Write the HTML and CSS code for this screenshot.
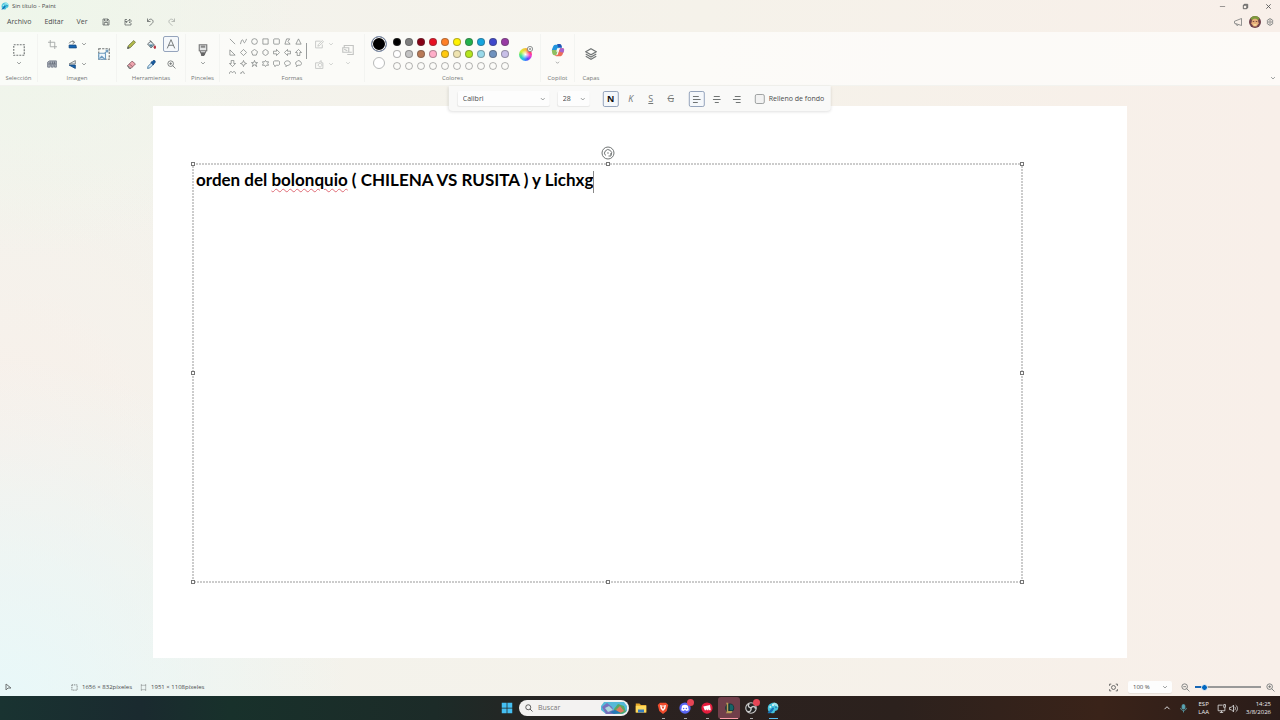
FILE: index.html
```html
<!DOCTYPE html>
<html lang="es">
<head>
<meta charset="utf-8">
<title>Sin título - Paint</title>
<link rel="stylesheet" href="styles.css">
</head>
<body>
<svg class="defs" aria-hidden="true">
  <symbol id="chev" viewBox="0 0 8 8"><path d="M1.500 2.800 4 5.300 6.500 2.800"/></symbol>
  <symbol id="paint" viewBox="0 0 16 16"><path d="M9 1c4 0 6.500 3 6 7-.4 3-2 3.500-3.500 3.500-1 0-1 1-1.200 2C10 14.500 9 15 7 15 3 15 1 12 1 8.500 1 4 4.500 1 9 1z" fill="#45c3dc" stroke="none"/><path d="M9 1c4 0 6.500 2.500 6 6-2-1-5-2-7-5z" fill="#9be6ee" stroke="none"/><path d="M1 14c2-1 3-4 7-7l1.500 1.500C7 14 4 15.500 1 15z" fill="#1672b8" stroke="none"/><circle cx="4.500" cy="6.500" r="1.300" fill="#d9f8fb" stroke="none"/><circle cx="8" cy="4" r="1.200" fill="#fff" stroke="none"/><circle cx="12" cy="7" r="1.200" fill="#2681b0" stroke="none"/></symbol>
</svg>

<header class="titlebar">
  <svg class="logo"><use href="#paint"/></svg>
  <h1 class="title">Sin título - Paint</h1>
  <div class="window-buttons">
    <button aria-label="Minimizar"><svg class="dim" viewBox="0 0 8 8"><path d="M1 4h6"/></svg></button>
    <button aria-label="Restaurar"><svg viewBox="0 0 8 8"><path d="M1.500 2.500h4v4h-4zM2.500 2.500v-1h4v4h-1"/></svg></button>
    <button aria-label="Cerrar"><svg viewBox="0 0 8 8"><path d="M1.500 1.500l5 5M6.500 1.500l-5 5"/></svg></button>
  </div>
</header>

<nav class="menubar">
  <button class="menu">Archivo</button>
  <button class="menu">Editar</button>
  <button class="menu">Ver</button>
  <div class="quick">
    <button aria-label="Guardar"><svg viewBox="0 0 16 16"><path d="M2 2h10l2 2v10H2zM5 2v4h6V2M4.500 14V9h7v5"/></svg></button>
    <button aria-label="Compartir"><svg viewBox="0 0 16 16"><path d="M6 3H2v11h12v-4M5 10c0-4 3-5 6-5V2l4 4-4 4V7M2 7h4"/></svg></button>
    <button aria-label="Deshacer"><svg viewBox="0 0 16 16"><path d="M3 1v6h6M3 7c3-5 7-6 10-3 3 4 0 7-6 11"/></svg></button>
    <button aria-label="Rehacer" disabled><svg viewBox="0 0 16 16"><path d="M13 1v6H7M13 7C10 2 6 1 3 4c-3 4 0 7 6 11"/></svg></button>
  </div>
  <div class="account">
    <button aria-label="Comentarios"><svg viewBox="0 0 16 16"><path d="M15 1v14L1 10.500v-4zM4 12c0 3 4 4 5 1.500"/></svg></button>
    <button class="avatar" aria-label="Cuenta"><svg viewBox="0 0 16 16"><circle cx="8" cy="8" r="8" fill="#70404a"/><path d="M2 3c3-4 9-4 12 0l-2 3H4z" fill="#7d9a3c"/><path d="M4 6c1-3 7-3 8 0l1 4-3 4H6l-3-4z" fill="#e7ad7a"/><path d="M5 7h2v1H5zm4 0h2v1H9z" fill="#5a3030"/><path d="M5 10l3 1 3-1-2 3H7z" fill="#f6dc9b"/></svg></button>
    <button aria-label="Configuración"><svg viewBox="0 0 16 16"><path d="M6.500 1.500h3l.5 2 2-.5 2 3-1.500 2 1.500 2-2 3-2-.5-.5 2h-3l-.5-2-2 .5-2-3L3.500 8 2 6l2-3 2 .5z"/><circle cx="8" cy="8" r="2.500"/></svg></button>
  </div>
</nav>

<section class="ribbon" aria-label="Herramientas de Paint">
  <div class="group g-select">
    <div class="tools stack">
      <button class="tool" aria-label="Seleccionar"><svg class="i12" viewBox="0 0 16 16"><rect x="1" y="1" width="14" height="14" stroke-dasharray="2.500 1.500"/></svg></button>
      <svg class="chev"><use href="#chev"/></svg>
    </div>
    <span class="caption">Selección</span>
  </div>

  <div class="group g-image">
    <div class="tools image-tools">
      <div class="col">
        <button class="tool" aria-label="Recortar"><svg viewBox="0 0 16 16" class="dim"><path d="M4 0v12h12M0 4h12v12"/></svg></button>
        <button class="tool" aria-label="Quitar fondo"><svg class="i10" viewBox="0 0 16 16"><path d="M1 13V5l3-2h11v10h-3v-3h-2v3H7v-3H5v3z" fill="#a9afb8" stroke="#7b8290"/><path d="M2 8h12M5 4v4M9 4v4M12 4v4" stroke="#686f7d"/></svg></button>
      </div>
      <div class="col">
        <button class="tool split" aria-label="Girar"><svg viewBox="0 0 16 16"><path d="M2 9h12l1 5H2z" fill="#1668b5" stroke="#174a80"/><path d="M2 6c2-4 6-4 9-2M8 1l4 3-4 3"/></svg><svg class="chev"><use href="#chev"/></svg></button>
        <button class="tool split" aria-label="Voltear"><svg viewBox="0 0 16 16"><path d="M13 1v6L2 7z" fill="#e7eef5"/><path d="M13 9v6L2 9z" fill="#1668b5" stroke="#174a80"/></svg><svg class="chev"><use href="#chev"/></svg></button>
      </div>
      <button class="tool resize" aria-label="Cambiar tamaño"><svg class="i12" viewBox="0 0 16 16"><rect x="1" y="1" width="14" height="14" stroke-dasharray="3 1.500"/><rect x="1" y="7" width="9" height="8" rx="1" fill="#eef6fc" stroke="#6d9cc0"/><path d="M2 14l3-3 4 4M9 7l4-4M10 3h3v3" stroke="#6d9cc0"/></svg></button>
    </div>
    <span class="caption">Imagen</span>
  </div>

  <div class="group g-tools">
    <div class="tools tool-grid">
      <button class="tool" aria-label="Lápiz"><svg viewBox="0 0 16 16"><path d="M1 15l1.500-5L12 1l3 3-9 9.500z" fill="#b4bd4a" stroke="#6d7440"/><path d="M1 15l1-3 2 2z" fill="#333"/></svg></button>
      <button class="tool" aria-label="Rellenar"><svg viewBox="0 0 16 16"><path d="M1 7l6-5 6 7-6 5z" fill="#e5edf1" stroke="#50585e"/><path d="M3 8h9l-5 5z" fill="#4f8299" stroke="none"/><path d="M5 0l3 5"/><path d="M14 10c3 4 1 5 0 5s-3-1 0-5z" fill="#c7303e" stroke="#a72634"/></svg></button>
      <button class="tool active" aria-label="Texto" aria-pressed="true"><svg class="i10" viewBox="0 0 16 16"><path d="M2 15L8 1l6 14M4.200 10h7.600"/></svg></button>
      <button class="tool" aria-label="Borrador"><svg viewBox="0 0 16 16"><path d="M1 10l8-8 6 5-8 8H4z" fill="#efa4ae" stroke="#885a62"/><path d="M1 10l6 5H4z" fill="#fff"/><path d="M4 7l6 5" stroke="#885a62"/></svg></button>
      <button class="tool" aria-label="Selector de color"><svg viewBox="0 0 16 16"><path d="M1 15l1-4 6-6 3 3-6 6z" fill="#d9edf9" stroke="#397099"/><path d="M7 4l2-1 2-2c2-2 5 1 3 4l-2 2-1 2z" fill="#165ba0" stroke="#174a80"/></svg></button>
      <button class="tool" aria-label="Lupa"><svg viewBox="0 0 16 16"><circle cx="6.500" cy="6.500" r="5"/><path d="M10 10l5 5M4 6.500h5M6.500 4v5"/></svg></button>
    </div>
    <span class="caption">Herramientas</span>
  </div>

  <div class="group g-brush">
    <div class="tools stack">
      <button class="tool" aria-label="Pinceles"><svg class="i12" viewBox="0 0 16 16"><path d="M3 1h10v8H3zM4 9h8l-1 3H5z" fill="#e4e6e6" stroke="#777"/><path d="M5 2h6v3H5z" fill="#888" stroke="none"/><path d="M6 12h4v2l-2 2-2-1z" fill="#666" stroke="#666"/></svg></button>
      <svg class="chev"><use href="#chev"/></svg>
    </div>
    <span class="caption">Pinceles</span>
  </div>

  <div class="group g-shapes">
    <div class="tools shape-tools">
      <div class="gallery">
        <button aria-label="Línea"><svg viewBox="0 0 16 16"><path d="M2 2l12 12"/></svg></button>
        <button aria-label="Curva"><svg viewBox="0 0 16 16"><path d="M1 14C4 2 6 2 8 8s4 2 7-6"/></svg></button>
        <button aria-label="Óvalo"><svg viewBox="0 0 16 16"><circle cx="8" cy="8" r="6.500"/></svg></button>
        <button aria-label="Rectángulo"><svg viewBox="0 0 16 16"><path d="M2 2h12v12H2z"/></svg></button>
        <button aria-label="Rectángulo redondeado"><svg viewBox="0 0 16 16"><rect x="1.500" y="2" width="13" height="12" rx="2"/></svg></button>
        <button aria-label="Polígono"><svg viewBox="0 0 16 16"><path d="M2 14L6 2h7l-4 6 5 6z"/></svg></button>
        <button aria-label="Triángulo"><svg viewBox="0 0 16 16"><path d="M8 2l6 12H2z"/></svg></button>
        <button aria-label="Triángulo rectángulo"><svg viewBox="0 0 16 16"><path d="M2 2v12h12z"/></svg></button>
        <button aria-label="Rombo"><svg viewBox="0 0 16 16"><path d="M8 1l7 7-7 7-7-7z"/></svg></button>
        <button aria-label="Pentágono"><svg viewBox="0 0 16 16"><path d="M8 1l7 5-3 8H4L1 6z"/></svg></button>
        <button aria-label="Hexágono"><svg viewBox="0 0 16 16"><path d="M8 1l6 4v6l-6 4-6-4V5z"/></svg></button>
        <button aria-label="Flecha derecha"><svg viewBox="0 0 16 16"><path d="M1 5h7V1l7 7-7 7v-4H1z"/></svg></button>
        <button aria-label="Flecha izquierda"><svg viewBox="0 0 16 16"><path d="M15 5H8V1L1 8l7 7v-4h7z"/></svg></button>
        <button aria-label="Flecha arriba"><svg viewBox="0 0 16 16"><path d="M5 15V8H1l7-7 7 7h-4v7z"/></svg></button>
        <button aria-label="Flecha abajo"><svg viewBox="0 0 16 16"><path d="M5 1v7H1l7 7 7-7h-4V1z"/></svg></button>
        <button aria-label="Estrella de 4 puntas"><svg viewBox="0 0 16 16"><path d="M8 1l2 5 5 2-5 2-2 5-2-5-5-2 5-2z"/></svg></button>
        <button aria-label="Estrella de 5 puntas"><svg viewBox="0 0 16 16"><path d="M8 1l2 5h5l-4 3 2 6-5-4-5 4 2-6-4-3h5z"/></svg></button>
        <button aria-label="Estrella de 6 puntas"><svg viewBox="0 0 16 16"><path d="M8 1l2 3h5l-2 4 2 4h-5l-2 3-2-3H1l2-4-2-4h5z"/></svg></button>
        <button aria-label="Llamada rectangular"><svg viewBox="0 0 16 16"><path d="M3 2h10l2 2v6l-2 2H8l-4 3v-3H3l-2-2V4z"/></svg></button>
        <button aria-label="Llamada ovalada"><svg viewBox="0 0 16 16"><path d="M5 12C-1 10 0 2 8 2s9 10 1 10l-5 3z"/></svg></button>
        <button aria-label="Llamada de nube"><svg viewBox="0 0 16 16"><path d="M4 12C0 9 1 4 4 4c2-4 8-3 8 0 5 2 3 8-1 8H7l-4 3z"/></svg></button>
        <button aria-label="Corazón"><svg viewBox="0 0 16 16"><path d="M8 15L1 8C0 0 6 0 8 4c2-4 8-4 7 4z"/></svg></button>
        <button aria-label="Relámpago"><svg viewBox="0 0 16 16"><path d="M1 5l6-4 8 14-9-6z"/></svg></button>
      </div>
      <div class="scroll-thumb"></div>
      <div class="col faded">
        <button class="tool split" disabled aria-label="Contorno"><svg viewBox="0 0 16 16"><path d="M10 2H1v12h12V8M5 11l1-3 7-7 2 2-7 7z"/></svg><svg class="chev"><use href="#chev"/></svg></button>
        <button class="tool split" disabled aria-label="Relleno"><svg viewBox="0 0 16 16"><path d="M1 5h5l5-4v4h3v10H1zM5 9l4-4 4 4-4 4z"/></svg><svg class="chev"><use href="#chev"/></svg></button>
      </div>
      <div class="stack faded">
        <button class="tool" disabled aria-label="Opciones de forma"><svg class="i12" viewBox="0 0 16 16"><path d="M3 5V2h12v12H7M1 5h8v6H1zM3 7l4 2M9 11h4"/></svg></button>
        <svg class="chev"><use href="#chev"/></svg>
      </div>
    </div>
    <span class="caption">Formas</span>
  </div>

  <div class="group g-colors">
    <div class="tools color-tools">
      <div class="current">
        <button class="primary" aria-label="Color 1"></button>
        <button class="secondary" aria-label="Color 2"></button>
      </div>
      <div class="palette">
        <button aria-label="Negro"></button><button aria-label="Gris"></button><button aria-label="Rojo oscuro"></button><button aria-label="Rojo"></button><button aria-label="Naranja"></button><button aria-label="Amarillo"></button><button aria-label="Verde"></button><button aria-label="Turquesa"></button><button aria-label="Índigo"></button><button aria-label="Púrpura"></button>
        <button aria-label="Blanco"></button><button aria-label="Gris claro"></button><button aria-label="Marrón"></button><button aria-label="Rosa"></button><button aria-label="Oro"></button><button aria-label="Amarillo claro"></button><button aria-label="Lima"></button><button aria-label="Turquesa claro"></button><button aria-label="Gris azulado"></button><button aria-label="Lavanda"></button>
        <button aria-label="Vacío 1"></button><button aria-label="Vacío 2"></button><button aria-label="Vacío 3"></button><button aria-label="Vacío 4"></button><button aria-label="Vacío 5"></button><button aria-label="Vacío 6"></button><button aria-label="Vacío 7"></button><button aria-label="Vacío 8"></button><button aria-label="Vacío 9"></button><button aria-label="Vacío 10"></button>
      </div>
      <button class="wheel" aria-label="Editar colores"><span class="disc"></span><svg class="plus" viewBox="0 0 8 8"><circle cx="4" cy="4" r="3.500" fill="#fafaf8"/><path d="M4 2.500v3M2.500 4h3"/></svg></button>
    </div>
    <span class="caption">Colores</span>
  </div>

  <div class="group g-copilot">
    <div class="tools stack">
      <button class="tool" aria-label="Copilot"><svg class="i14" viewBox="0 0 16 16"><path d="M5 2h5c1.500 0 1.800 1 2 2l.5 1.500H9L7.500 10H3C0 10 1 7 2 5s1-3 3-3z" fill="#2395dd" stroke="none"/><path d="M9 1h1c2 0 2 2 2.500 4H9.500C8 5 8 4 7 1z" fill="#2455b6" stroke="none"/><path d="M1 8c0 4 1 6 3 6h2l2-6z" fill="#8fbf62" stroke="none"/><path d="M4 14h2c2 0 2-2 3-5l1-3h3c3 0 2 3 1 5s-1 4-4 4H6c-1 0-1.500-.5-2-1z" fill="#ec6c58" stroke="none"/><path d="M10 6h3c3 0 2 3 1 5l-4-1z" fill="#a864cc" stroke="none"/><path d="M7 6h3l-1.500 4H6z" fill="#fafaf8" stroke="none"/></svg></button>
      <svg class="chev small"><use href="#chev"/></svg>
    </div>
    <span class="caption">Copilot</span>
  </div>

  <div class="group g-layers">
    <div class="tools center">
      <button class="tool" aria-label="Capas"><svg class="i12" viewBox="0 0 16 16"><path d="M8 1l7 4-7 4-7-4zM1 8l7 4 7-4M1 11l7 4 7-4"/></svg></button>
    </div>
    <span class="caption">Capas</span>
  </div>
  <button class="collapse" aria-label="Contraer cinta"><svg class="chev"><use href="#chev"/></svg></button>
</section>

<main class="workspace">
  <div class="textbar" role="toolbar" aria-label="Formato de texto">
    <div class="combo font"><select aria-label="Fuente"><option>Calibri</option></select><svg class="chev"><use href="#chev"/></svg></div>
    <div class="combo size"><select aria-label="Tamaño"><option>28</option></select><svg class="chev"><use href="#chev"/></svg></div>
    <div class="styles">
      <button class="toggle active bold" aria-pressed="true">N</button>
      <button class="toggle italic">K</button>
      <button class="toggle under">S</button>
      <button class="toggle strike">G</button>
    </div>
    <div class="styles aligns">
      <button class="toggle active" aria-label="Izquierda" aria-pressed="true"><svg viewBox="0 0 8 8"><path d="M0 1.500h6M0 4.500h8M0 7.500h5"/></svg></button>
      <button class="toggle" aria-label="Centro"><svg viewBox="0 0 8 8"><path d="M1 1.500h6M0 4.500h8M2 7.500h4"/></svg></button>
      <button class="toggle" aria-label="Derecha"><svg viewBox="0 0 8 8"><path d="M2 1.500h6M0 4.500h8M3 7.500h5"/></svg></button>
    </div>
    <label class="fill"><input type="checkbox">Relleno de fondo</label>
  </div>
  <div class="canvas">
    <div class="textframe">
      <svg class="outline"><rect width="100%" height="100%"/></svg>
      <div class="text" contenteditable="true" spellcheck="false" role="textbox" aria-label="Texto">orden del <span class="typo">bolonquio</span> ( CHILENA VS RUSITA ) y Lichxg<span class="caret"></span></div>
      <i class="handle tl"></i><i class="handle tc"></i><i class="handle tr"></i>
      <i class="handle ml"></i><i class="handle mr"></i>
      <i class="handle bl"></i><i class="handle bc"></i><i class="handle br"></i>
      <svg class="rotate" viewBox="0 0 14 14"><circle cx="7" cy="7" r="6"/><path d="M4.500 9.500A3.500 3.500 0 1 1 10 9M10 7v3H7.500"/><circle cx="7" cy="7" r=".3"/></svg>
    </div>
  </div>
</main>

<footer class="status">
  <svg class="pointer" viewBox="0 0 8 8"><path d="M2 1v6l2-2h3z"/></svg>
  <span class="dims"><svg viewBox="0 0 8 8"><rect x="1" y="1" width="6" height="6" stroke-dasharray="1.500 1"/></svg>1656 × 832píxeles</span>
  <span class="dims"><svg viewBox="0 0 8 8"><path d="M1.500 1.500h5v5h-5z" opacity=".5"/><path d="M1 1h1M6 1h1M1 7h1M6 7h1"/></svg>1951 × 1108píxeles</span>
  <div class="zoom">
    <button class="fit" aria-label="Ajustar a la ventana"><svg viewBox="0 0 16 16"><path d="M1 5V2h3M12 2h3v3M15 11v3h-3M4 14H1v-3"/><circle cx="8" cy="8" r="3.500"/></svg></button>
    <div class="combo percent"><select aria-label="Zoom"><option>100 %</option></select><svg class="chev"><use href="#chev"/></svg></div>
    <button aria-label="Alejar"><svg viewBox="0 0 16 16"><circle cx="6.500" cy="6.500" r="5"/><path d="M10 10l5 5M4 6.500h5"/></svg></button>
    <input class="slider" type="range" min="0" max="100" value="10" aria-label="Nivel de zoom">
    <button aria-label="Acercar"><svg viewBox="0 0 16 16"><circle cx="6.500" cy="6.500" r="5"/><path d="M10 10l5 5M4 6.500h5M6.500 4v5"/></svg></button>
  </div>
</footer>

<div class="taskbar">
  <div class="apps">
    <button class="app" aria-label="Inicio"><svg viewBox="0 0 16 16"><path d="M1 1h6.500v6.500H1zM8.500 1H15v6.500H8.500zM1 8.500h6.500V15H1zM8.500 8.500H15V15H8.500z" fill="#45bff2"/></svg></button>
    <label class="search"><svg class="lens" viewBox="0 0 16 16"><circle cx="6.500" cy="6.500" r="5"/><path d="M10 10l5 5"/></svg><input type="text" placeholder="Buscar" aria-label="Buscar"><svg class="art" viewBox="0 0 26 14"><path d="M3 1h20l3 4v5l-4 3H5L0 9V5z" fill="#55b9d8"/><path d="M1 6l5-4 5 4 3 7H5z" fill="#7771bd"/><path d="M4 7l4-2 4 4-5 2z" fill="#acd8dc"/><path d="M13 8l4-5 6 2 2 6-5 2-7-1z" fill="#58a865"/><path d="M15 9l4-4 4 5-4 2z" fill="#e37860"/><path d="M9 11l5-2 6 3-7 1z" fill="#2779b9"/></svg></label>
    <button class="app" aria-label="Explorador de archivos"><svg viewBox="0 0 16 16"><path d="M1 2h5l2 2h7v10H1z" fill="#e7a728"/><path d="M1 5h14v9H1z" fill="#ffd95d"/><path d="M4 10h8v4H4z" fill="#397dbd"/></svg></button>
    <button class="app run" aria-label="Brave"><svg viewBox="0 0 16 16"><path d="M4 1h8l3 3-2 8-5 4-5-4-2-8z" fill="#f04c2d"/><path d="M4 4l4 1 4-1-1 5-3 3-3-3z" fill="#fff"/><path d="M6 6l2 4 2-4z" fill="#f04c2d"/></svg></button>
    <button class="app run" aria-label="Discord"><svg viewBox="0 0 16 16"><circle cx="8" cy="8" r="7.500" fill="#5865f2"/><path d="M4 5c3-2 5-2 8 0l1 6-3 1-1-1H7l-1 1-3-1z" fill="#fff"/><circle cx="6.200" cy="8.500" r="1" fill="#5865f2"/><circle cx="9.800" cy="8.500" r="1" fill="#5865f2"/></svg><span class="badge"></span></button>
    <button class="app run" aria-label="Riot Client"><svg viewBox="0 0 16 16"><circle cx="8" cy="8" r="7.500" fill="#e51d3d"/><path d="M3 6l9-2 1 7h-2l-1-2v2H8L7 9v2H5z" fill="#fff"/></svg></button>
    <button class="app current-game" aria-label="League of Legends"><svg viewBox="0 0 16 16"><circle cx="9" cy="8" r="6" fill="#123437"/><path d="M4 1h3v11h6l-2 3H4l1-2V3z" fill="#b99c56"/><path d="M9 3c5 0 6 5 4 8H9z" fill="#156467"/></svg></button>
    <button class="app run" aria-label="OBS Studio"><svg viewBox="0 0 16 16"><circle cx="8" cy="8" r="7" fill="#222" stroke="#ccc"/><path d="M8 8C3 7 4 3 6 2M8 8c3-4 6-1 6 1M8 8c1 5-3 6-5 4" stroke="#ccc" stroke-width="2"/></svg><span class="badge"></span></button>
    <button class="app run open" aria-label="Paint"><svg><use href="#paint"/></svg></button>
  </div>
  <div class="tray">
    <button aria-label="Iconos ocultos"><svg viewBox="0 0 8 8"><path d="M1.500 5.200 4 2.700 6.500 5.200"/></svg></button>
    <button class="mic" aria-label="Micrófono"><svg viewBox="0 0 16 16"><rect x="5.500" y="1" width="5" height="8" rx="2.500" fill="#5aa6b4"/><path d="M3 7c0 6 10 6 10 0M8 12v3"/></svg></button>
    <span class="lang">ESP<br>LAA</span>
    <div class="system">
      <svg viewBox="0 0 16 16"><path d="M10 2H2v10h12V7M5 15h6M12 1h3v5h-3zM8 12v3"/></svg>
      <svg viewBox="0 0 16 16"><path d="M1 6h3l4-4v12l-4-4H1zM10 5c2 2 2 4 0 6M12 2c4 3 4 9 0 12"/></svg>
    </div>
    <time class="clock">14:25<br>3/8/2026</time>
  </div>
</div>
</body>
</html>
```
FILE: styles.css
```css
* { box-sizing: border-box; }

body {
  margin: 0;
  min-height: 100vh;
  display: flex;
  flex-direction: column;
  font-family: "Open Sans", "Noto Sans", sans-serif;
  font-size: 6px;
  line-height: 8px;
  color: #4a4c4c;
  background:
    radial-gradient(circle at 0 98%, #e8f8f9 0, transparent 24%),
    radial-gradient(circle at 3% 0, #eef6ea 0, transparent 18%),
    radial-gradient(circle at 0 60%, #f8f0ea 0, transparent 22%),
    linear-gradient(90deg, #f3f3ed, #f5f2ea 55%, #f8efe9);
}

button, select, input { font: inherit; color: inherit; }
button {
  display: flex;
  align-items: center;
  justify-content: center;
  padding: 0;
  border: 0;
  background: none;
}
svg { display: block; width: 9px; height: 9px; flex: none; fill: none; stroke: #707474; stroke-width: 1.5; }
svg[viewBox="0 0 8 8"] { width: 8px; height: 8px; stroke-width: 1; }
.defs { position: absolute; width: 0; height: 0; }
.chev, svg.chev { width: 6px; height: 6px; stroke: #7a7d7d; stroke-width: 1; }
svg.small { width: 5px; height: 5px; }

/* Title bar and menus */
.titlebar { display: flex; align-items: center; height: 12px; padding-left: 1px; }
.logo { width: 8px; height: 8px; }
.title { margin: 0 0 0 3px; font-size: 6px; font-weight: 400; }
.window-buttons { display: flex; margin-left: auto; }
.window-buttons button { width: 23px; height: 12px; }
.window-buttons svg { width: 7px; height: 7px; stroke: #555; }
.menubar { display: flex; align-items: center; height: 20px; padding: 0 6px 0 2px; }
.menu { height: 16px; padding: 0 5px; margin-right: 3px; font-size: 7px; }
.quick { display: flex; margin-left: -1px; }
.quick button { width: 22px; height: 16px; }
.quick svg { width: 8px; height: 8px; stroke: #5c6060; }
.quick button:disabled { opacity: .5; }
.account { display: flex; align-items: center; gap: 5px; margin-left: auto; }
.account button { width: 12px; height: 16px; }
.account button:last-child { width: 8px; }
.account svg { width: 8px; height: 8px; }
.account .avatar svg { width: 12px; height: 12px; stroke: none; }

/* Ribbon */
.ribbon {
  display: flex;
  height: 54px;
  padding-top: 2px;
  background: rgba(255, 255, 255, .65);
  border-bottom: 1px solid #f3f3ef;
}
.group { display: flex; flex-direction: column; flex: none; height: 48px; border-right: 1px solid #f3f4f1; }
.caption { text-align: center; color: #747777; }
.tools { display: flex; height: 40px; }
.tool { width: 16px; height: 16px; border: 1px solid transparent; border-radius: 2px; }
.active { background: #f5f8fb; border: 1px solid #95a4bc; }
.i10 { width: 10px; height: 10px; }
.i12 { width: 12px; height: 12px; }
.i14 { width: 14px; height: 14px; }
.dim { opacity: .65; }
.stack { display: flex; flex-direction: column; align-items: center; gap: 2px; padding-top: 8px; }
.center { align-items: center; justify-content: center; }
.col { display: flex; flex-direction: column; justify-content: space-around; height: 40px; }
.split { width: 22px; gap: 4px; }
.faded { opacity: .4; }
.g-select { width: 38px; }
.g-image { width: 79px; }
.image-tools { align-items: center; gap: 6px; padding-left: 6px; }
.resize { margin-left: 2px; }
.g-tools { width: 69px; }
.tool-grid { display: grid; grid-template-columns: repeat(3, 20px); grid-template-rows: 20px 20px; place-items: center; padding-left: 4px; }
.g-brush { width: 34px; }
.g-shapes { width: 145px; }
.shape-tools { gap: 2px; padding-left: 7px; }
.gallery { display: grid; grid-template-columns: repeat(7, 11px); grid-auto-rows: 11px; height: 40px; padding-top: 2px; overflow: hidden; }
.gallery svg { width: 7px; height: 7px; }
.scroll-thumb { width: 1px; height: 16px; margin: 9px 4px 0 0; background: #999c9c; }
.shape-tools .stack { margin-left: 3px; }
.g-colors { width: 176px; }
.color-tools { gap: 4px; padding-left: 5px; align-items: center; }
.current { display: flex; flex-direction: column; align-items: center; gap: 5px; width: 17px; height: 40px; padding-top: 2px; }
.primary { width: 16px; height: 16px; border: 1px solid #8090ad; border-radius: 50%; background: #000; box-shadow: inset 0 0 0 1px #fff; }
.secondary { width: 12px; height: 12px; border: 1px solid #b7b9b9; border-radius: 50%; background: #fff; }
.palette { display: grid; grid-template-columns: repeat(10, 12px); grid-auto-rows: 12px; place-items: center; }
.palette button { width: 8px; height: 8px; border: 1px solid rgba(70, 70, 70, .4); border-radius: 50%; }
.palette button:nth-child(1) { background: #000; }
.palette button:nth-child(2) { background: #7f7f7f; }
.palette button:nth-child(3) { background: #880015; }
.palette button:nth-child(4) { background: #e81123; }
.palette button:nth-child(5) { background: #ff7f27; }
.palette button:nth-child(6) { background: #fff200; }
.palette button:nth-child(7) { background: #22b14c; }
.palette button:nth-child(8) { background: #16a5df; }
.palette button:nth-child(9) { background: #3f48cc; }
.palette button:nth-child(10) { background: #983aa4; }
.palette button:nth-child(11) { background: #fff; }
.palette button:nth-child(12) { background: #c3c3c3; }
.palette button:nth-child(13) { background: #b97a57; }
.palette button:nth-child(14) { background: #ffaec9; }
.palette button:nth-child(15) { background: #ffc90e; }
.palette button:nth-child(16) { background: #efe4b0; }
.palette button:nth-child(17) { background: #b5e61d; }
.palette button:nth-child(18) { background: #99d9ea; }
.palette button:nth-child(19) { background: #7092be; }
.palette button:nth-child(20) { background: #c8bfe7; }
.wheel { position: relative; width: 20px; height: 20px; }
.disc { width: 13px; height: 13px; border-radius: 50%; background: radial-gradient(circle, #fff 0, transparent 50%), conic-gradient(#f3c13b, #ff453c, #f53cd0, #574aff, #26b7f3, #40e38c, #d9ef38, #f3c13b); }
.wheel .plus { position: absolute; top: 2px; right: 2px; width: 6px; height: 6px; }
.g-copilot { width: 34px; }
.g-layers { width: 32px; border-right: 0; }
.collapse { align-self: flex-end; margin: 0 4px 4px auto; }

/* Workspace */
.workspace { position: relative; display: flex; flex: 1; padding: 20px 153px; }
.canvas { position: relative; flex: 1; min-height: 552px; background: #fff; }
.textbar {
  position: absolute;
  z-index: 2;
  top: 0;
  left: 50%;
  transform: translateX(-50%);
  display: flex;
  align-items: center;
  height: 25px;
  padding: 0 7px 0 9px;
  border-radius: 0 0 4px 4px;
  background: #f9f9f8;
  box-shadow: 0 1px 3px rgba(0, 0, 0, .12);
}
.combo { position: relative; display: flex; align-items: center; height: 15px; border-radius: 2px; background: #fdfdfd; box-shadow: 0 1px 1px rgba(0, 0, 0, .07); }
.combo select { width: 100%; height: 100%; padding: 0 0 0 5px; border: 0; background: none; appearance: none; }
.combo .chev { position: absolute; right: 4px; pointer-events: none; }
.font { width: 92px; }
.size { width: 32px; margin-left: 8px; }
.styles { display: flex; gap: 4px; margin-left: 13px; }
.aligns { margin-left: 10px; }
.toggle { width: 16px; height: 16px; border-radius: 2px; font-size: 9px; color: #747777; }
.bold { font-weight: 700; color: #111; }
.italic { font-style: italic; }
.under { text-decoration: underline; }
.strike { text-decoration: line-through; }
.fill { display: flex; align-items: center; gap: 4px; margin-left: 10px; }
.fill input { appearance: none; width: 10px; height: 10px; margin: 0; border: 1px solid #9fa2a2; border-radius: 2px; background: #f2f2f2; }
.textbar .combo, .fill { font-size: 7px; }

.textframe { position: absolute; left: 40px; right: 105px; top: 58px; bottom: 76px; }
.outline { position: absolute; inset: 0; width: 100%; height: 100%; overflow: visible; stroke: #999; stroke-width: 1; stroke-dasharray: 2 1; }
.text { position: relative; padding: 5px 4px 4px 3px; outline: 0; font-family: Lato, sans-serif; font-size: 17px; font-weight: 700; line-height: 22px; color: #000; }
.typo { text-decoration: underline wavy #df6b75 1px; text-underline-offset: 2px; }
.caret { display: inline-block; width: 1px; height: 22px; vertical-align: middle; background: #888; }
.handle { position: absolute; width: 4px; height: 4px; margin: -2px; border: 1px solid #777; background: #fff; }
.tl, .tc, .tr { top: 0; }
.ml, .mr { top: 50%; }
.bl, .bc, .br { top: 100%; }
.tl, .ml, .bl { left: 0; }
.tc, .bc { left: 50%; }
.tr, .mr, .br { left: 100%; }
.rotate { position: absolute; left: 50%; top: -18px; width: 14px; height: 14px; margin-left: -7px; stroke-width: 1; }

/* Status bar */
.status { display: flex; align-items: center; height: 18px; padding: 0 5px 0 4px; }
.pointer { margin-right: 59px; }
.dims { display: flex; align-items: center; gap: 4px; margin-right: 8px; }
.dims svg { width: 7px; height: 7px; }
.zoom { display: flex; align-items: center; gap: 5px; margin-left: auto; }
.zoom button svg { width: 9px; height: 9px; }
.fit svg { stroke: #555; }
.percent { width: 44px; height: 12px; margin: 0 4px 0 5px; }
.slider { appearance: none; width: 66px; height: 10px; margin: 0; background: linear-gradient(90deg, #1766b4 13%, #999 13%) center / 100% 2px no-repeat; }
.slider::-webkit-slider-thumb { appearance: none; width: 7px; height: 7px; border: 1px solid #f4f4f4; border-radius: 50%; background: #0067c0; }

/* Taskbar */
.taskbar {
  display: grid;
  grid-template-columns: 1fr auto 1fr;
  align-items: center;
  height: 24px;
  color: #eee;
  background: linear-gradient(90deg, #193331, #1a2a2f 11%, #18312b 18%, #1c2b28 34%, #2a2221 45%, #2c211d 70%, #3a2319 86%, #2a1c19);
}
.apps { grid-column: 2; display: flex; align-items: center; }
.app { position: relative; width: 22px; height: 22px; border-radius: 3px; }
.app svg { width: 12px; height: 12px; stroke: none; }
.run::after, .current-game::after { content: ""; position: absolute; bottom: 0; width: 3px; height: 1px; background: #aaa; }
.current-game { background: #713f4a; }
.current-game::after { width: 18px; background: #ff9da9; }
.open::after { width: 9px; background: #58bff0; }
.badge { position: absolute; top: 2px; right: 2px; width: 7px; height: 7px; border-radius: 50%; background: #e64555; }
.search { display: flex; align-items: center; width: 110px; height: 16px; margin: 0 1px; padding: 0 2px 0 6px; border-radius: 8px; background: #f3f2f1; }
.search input { flex: 1; width: 0; padding: 0 0 0 5px; border: 0; outline: 0; background: none; font-size: 7px; }
.search input::placeholder { color: #777; }
.lens { width: 8px; height: 8px; stroke: #333; }
.art { width: 26px; height: 14px; stroke: none; }
.tray { display: flex; align-items: center; justify-content: flex-end; gap: 8px; padding-right: 9px; text-align: center; }
.tray svg { stroke: #ddd; }
.tray .mic svg { stroke: #5aa6b4; }
.lang { margin-left: 2px; }
.system { display: flex; gap: 3px; }
.clock { text-align: right; }
```
